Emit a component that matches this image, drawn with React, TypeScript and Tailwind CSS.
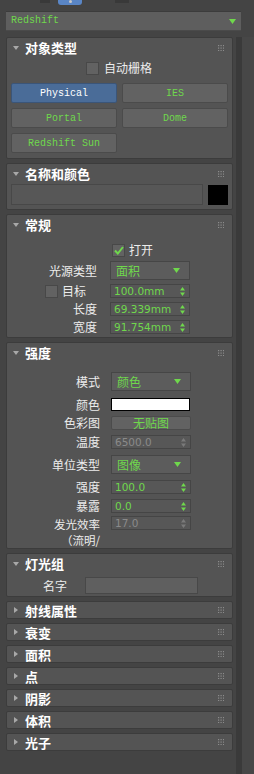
import React from 'react';

const CJK = '"Noto Sans CJK SC", "Noto Sans", sans-serif';
const MONO = '"Liberation Mono", "DejaVu Sans Mono", monospace';

const Grip = () => (
    <svg width="6" height="6" viewBox="0 0 6 6" className="shrink-0">
        {[0, 2.5, 5].map(y => [0, 2.5, 5].map(x => (
            <rect key={`${x}-${y}`} x={x} y={y} width="1.2" height="1.2" fill="#8c8c8c" />
        )))}
    </svg>
);

const Tri = ({ open }: { open: boolean }) => (
    <svg width="6" height="6" viewBox="0 0 6 6" className="shrink-0">
        {open ? <path d="M0 1 L6 1 L3 5 Z" fill="#a8a8a8" /> : <path d="M1 0 L5 3 L1 6 Z" fill="#a8a8a8" />}
    </svg>
);

const DownArrow = ({ color = '#6fd84c' }: { color?: string }) => (
    <svg width="7" height="5" viewBox="0 0 7 5"><path d="M0 0 L7 0 L3.5 5 Z" fill={color} /></svg>
);

const SpinArrows = ({ color = '#6fd84c' }: { color?: string }) => (
    <svg width="5" height="9" viewBox="0 0 5 9">
        <path d="M0 3.5 L5 3.5 L2.5 0 Z" fill={color} />
        <path d="M0 5.5 L5 5.5 L2.5 9 Z" fill={color} />
    </svg>
);

const Panel: React.FC<{ title: string; open?: boolean; children?: React.ReactNode }> = ({ title, open = false, children }) => (
    <div className="bg-[#545454] border border-[#3c3c3c] rounded-[2px]">
        <div className={`flex items-center pl-[6px] pr-[8px] ${open ? 'h-[19px]' : 'h-[16px]'}`}>
            <Tri open={open} />
            <span className="ml-[6px] text-[13px] font-bold text-white leading-none flex-1" style={{ fontFamily: CJK }}>{title}</span>
            <Grip />
        </div>
        {children}
    </div>
);

const Check = ({ checked = false }: { checked?: boolean }) => (
    <div className="w-[13px] h-[13px] bg-[#626262] border border-[#484848] flex items-center justify-center">
        {checked && (
            <svg width="10" height="9" viewBox="0 0 10 9"><path d="M1 4.5 L3.8 7.5 L9 1" stroke="#6fd84c" strokeWidth="2" fill="none" /></svg>
        )}
    </div>
);

const Spinner = ({ value, disabled = false }: { value: string; disabled?: boolean }) => (
    <div className="w-[80px] h-[14px] bg-[#575757] border border-[#454545] flex items-center pl-[3px] pr-[4px]">
        <span className={`flex-1 text-[10.5px] leading-none ${disabled ? 'text-[#8a8a8a]' : 'text-[#6fd84c]'}`} style={{ fontFamily: '"DejaVu Sans", sans-serif' }}>{value}</span>
        <SpinArrows color={disabled ? '#7a7a7a' : '#6fd84c'} />
    </div>
);

const Dropdown = ({ value }: { value: string }) => (
    <div className="w-[80px] h-[19px] bg-[#5c5c5c] border border-[#464646] flex items-center pl-[5px] pr-[9px]">
        <span className="flex-1 text-[12px] leading-none text-[#6fd84c]" style={{ fontFamily: CJK }}>{value}</span>
        <DownArrow />
    </div>
);

const Label = ({ children, w }: { children: React.ReactNode; w: number }) => (
    <div className="text-right text-[12px] leading-none text-[#ececec] shrink-0" style={{ width: w, fontFamily: CJK }}>{children}</div>
);

const LightButton = ({ label, active = false }: { label: string; active?: boolean }) => (
    <div className={`h-[20px] rounded-[2px] border flex items-center justify-center text-[10px] ${active ? 'bg-[#4a6c98] border-[#3b5578] text-white' : 'bg-[#626262] border-[#4b4b4b] text-[#6fd84c]'}`} style={{ fontFamily: MONO }}>
        {label}
    </div>
);

export default function App() {
    return (
        <div className="w-[254px] h-[774px] bg-[#444444] overflow-hidden flex flex-col" style={{ fontFamily: CJK }}>
            {/* top tab strip */}
            <div className="h-[11px] relative shrink-0">
                <div className="absolute left-[40px] top-0 w-[10px] h-[3px] bg-[#393939]" />
                <div className="absolute left-[58px] top-0 w-[24px] h-[5px] bg-[#5a86c6] rounded-b-[3px] flex justify-center">
                    <div className="w-[3px] h-[3px] bg-[#c8c8c8] rounded-full" />
                </div>
                <div className="absolute left-[115px] top-0 w-[14px] h-[3px] bg-[#393939]" />
            </div>

            {/* renderer dropdown */}
            <div className="ml-[6px] w-[235px] h-[20px] bg-[#5e5e5e] border-t border-[#3c3c3c] border-b border-b-[#4a4a4a] flex items-center pl-[5px] pr-[5px] shrink-0">
                <span className="flex-1 text-[10px] text-[#6fd84c] leading-none" style={{ fontFamily: MONO }}>Redshift</span>
                <DownArrow />
            </div>

            <div className="flex flex-1 mt-[6px]">
                <div className="w-[236px] pl-[6px] pr-[3px] flex flex-col gap-[4px] shrink-0">
                    <Panel title="对象类型" open>
                        <div className="mt-[3px] h-[16px] flex items-center pl-[79px] gap-[5px]">
                            <Check />
                            <span className="text-[12px] leading-none text-[#ececec]">自动栅格</span>
                        </div>
                        <div className="mt-[7px] px-[4px] pb-[5px] grid grid-cols-2 gap-[5px]">
                            <LightButton label="Physical" active />
                            <LightButton label="IES" />
                            <LightButton label="Portal" />
                            <LightButton label="Dome" />
                            <LightButton label="Redshift Sun" />
                        </div>
                    </Panel>

                    <Panel title="名称和颜色" open>
                        <div className="mt-[1px] px-[4px] pb-[4px] flex gap-[5px]">
                            <div className="w-[192px] h-[21px] bg-[#575757] border border-[#484848]" />
                            <div className="w-[20px] h-[20px] bg-black mt-[1px]" />
                        </div>
                    </Panel>

                    <Panel title="常规" open>
                        <div className="mt-[9px] flex items-center pl-[105px] gap-[4px] h-[14px]">
                            <Check checked />
                            <span className="text-[12px] leading-none text-[#ececec]">打开</span>
                        </div>
                        <div className="mt-[4px] flex flex-col gap-[4px] pb-[3px]">
                            <div className="flex items-center gap-[13px]">
                                <Label w={90}>光源类型</Label>
                                <Dropdown value="面积" />
                            </div>
                            <div className="flex items-center">
                                <div className="w-[103px] flex items-center pl-[38px] gap-[4px] shrink-0">
                                    <Check />
                                    <span className="text-[12px] leading-none text-[#ececec]">目标</span>
                                </div>
                                <Spinner value="100.0mm" />
                            </div>
                            <div className="flex items-center gap-[13px]">
                                <Label w={90}>长度</Label>
                                <Spinner value="69.339mm" />
                            </div>
                            <div className="flex items-center gap-[13px]">
                                <Label w={90}>宽度</Label>
                                <Spinner value="91.754mm" />
                            </div>
                        </div>
                    </Panel>

                    <Panel title="强度" open>
                        <div className="mt-[10px] flex flex-col">
                            <div className="flex items-center gap-[11px]">
                                <Label w={93}>模式</Label>
                                <Dropdown value="颜色" />
                            </div>
                            <div className="mt-[7px] flex items-center gap-[11px]">
                                <Label w={93}>颜色</Label>
                                <div className="w-[79px] h-[13px] bg-white border border-black" />
                            </div>
                            <div className="mt-[5px] flex items-center gap-[11px]">
                                <Label w={93}>色彩图</Label>
                                <div className="w-[80px] h-[14px] bg-[#626262] border border-[#4b4b4b] rounded-[2px] flex items-center justify-center text-[12px] leading-none text-[#6fd84c]">无贴图</div>
                            </div>
                            <div className="mt-[5px] flex items-center gap-[11px]">
                                <Label w={93}>温度</Label>
                                <Spinner value="6500.0" disabled />
                            </div>
                            <div className="mt-[6px] flex items-center gap-[11px]">
                                <Label w={93}>单位类型</Label>
                                <Dropdown value="图像" />
                            </div>
                            <div className="mt-[6px] flex items-center gap-[11px]">
                                <Label w={93}>强度</Label>
                                <Spinner value="100.0" />
                            </div>
                            <div className="mt-[5px] flex items-center gap-[11px]">
                                <Label w={93}>暴露</Label>
                                <Spinner value="0.0" />
                            </div>
                            <div className="mt-[3px] flex items-start gap-[11px]">
                                <div className="w-[93px] shrink-0 flex flex-col items-end text-[11.5px] leading-[16px] text-[#ececec]">
                                    <span>发光效率</span>
                                    <span>（流明/</span>
                                </div>
                                <Spinner value="17.0" disabled />
                            </div>
                        </div>
                    </Panel>

                    <Panel title="灯光组" open>
                        <div className="mt-[4px] pb-[2px] flex items-center">
                            <Label w={60}>名字</Label>
                            <div className="ml-[18px] w-[113px] h-[17px] bg-[#5f5f5f] border border-[#484848]" />
                        </div>
                    </Panel>

                    {['射线属性', '衰变', '面积', '点', '阴影', '体积', '光子'].map(t => (
                        <Panel key={t} title={t} />
                    ))}
                </div>
                <div className="w-[6px] bg-[#3a3a3a] shrink-0" />
                <div className="flex-1 bg-[#474747]" />
            </div>
        </div>
    );
}
